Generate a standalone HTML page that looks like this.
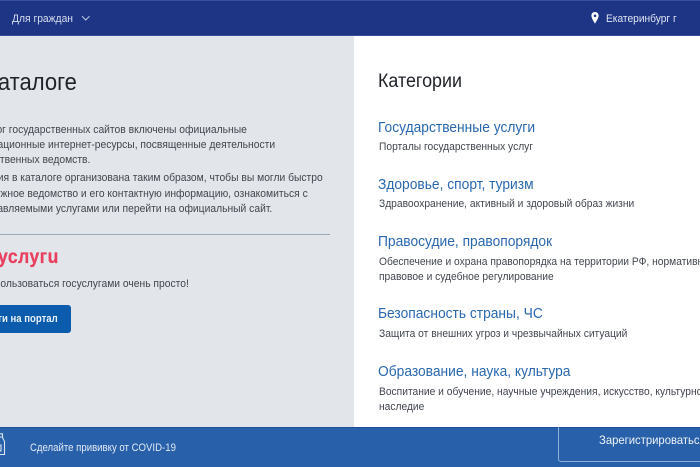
<!DOCTYPE html>
<html lang="ru"><head><meta charset="utf-8"><title>Каталог</title>
<style>
html,body{margin:0;padding:0;width:700px;height:467px;overflow:hidden;background:#fff}
body{position:relative;font-family:"Liberation Sans",sans-serif}
.t{position:absolute;white-space:nowrap;margin:0;transform-origin:0 50%}
#wrap{position:absolute;left:0;top:0;width:700px;height:467px;overflow:hidden;filter:blur(.3px)}
.b{font-size:11px;line-height:15px;color:#41464e;transform:scaleX(.937)}
.h{font-size:15px;line-height:18px;color:#2a68ae;transform:scaleX(.92)}
.s{font-size:11px;line-height:15px;color:#41464e;transform:scaleX(.932)}
</style></head><body><div id="wrap">
<div style="position:absolute;left:0;top:0;width:700px;height:36px;background:#1e3585;border-top:1px solid #3a509c;border-bottom:1px solid #3a509c;box-sizing:border-box"></div>
<div class="t" style="left:12px;top:12px;font-size:11px;line-height:14px;color:#d8dfef;transform:scaleX(.937)">Для граждан</div>
<svg style="position:absolute;left:81px;top:15px" width="10" height="7" viewBox="0 0 10 7"><path d="M1 1.2 L4.7 5 L8.5 1.2" fill="none" stroke="#c5cfe6" stroke-width="1"/></svg>
<svg style="position:absolute;left:591px;top:12px" width="8" height="12" viewBox="0 0 8 12"><path fill-rule="evenodd" d="M4 0C1.8 0 .4 1.6.4 3.7.4 6.2 4 11.5 4 11.5S7.6 6.2 7.6 3.7C7.6 1.6 6.2 0 4 0ZM4 2.5A1.3 1.3 0 1 1 4 5.1 1.3 1.3 0 1 1 4 2.5Z" fill="#fff"/></svg>
<div class="t" style="left:606px;top:12px;font-size:11px;line-height:14px;color:#dfe5f2;transform:scaleX(.927)">Екатеринбург г</div>

<div style="position:absolute;left:0;top:36px;width:354px;height:391px;background:#e2e5ea"></div>
<div class="t" style="left:-33px;top:69px;font-size:24px;line-height:28px;color:#1f2329;transform:scaleX(.917)">В каталоге</div>
<div class="t b" style="left:-40px;top:123px">В каталог государственных сайтов включены официальные</div>
<div class="t b" style="left:-41px;top:138px">информационные интернет-ресурсы, посвященные деятельности</div>
<div class="t b" style="left:-42px;top:153px">государственных ведомств.</div>
<div class="t b" style="left:-54px;top:171px">Информация в каталоге организована таким образом, чтобы вы могли быстро</div>
<div class="t b" style="left:-41px;top:187px">найти нужное ведомство и его контактную информацию, ознакомиться с</div>
<div class="t b" style="left:-41px;top:202px">предоставляемыми услугами или перейти на официальный сайт.</div>
<div style="position:absolute;left:0;top:234px;width:330px;height:1px;background:#9aa8b8"></div>
<div class="t" style="left:-2px;top:246px;font-size:19px;line-height:24px;font-weight:bold;color:#e8405f;letter-spacing:.6px;-webkit-text-stroke:.3px #e8405f;transform:scaleX(.92)">услугu</div>
<div class="t b" style="left:-42px;top:277px">Начать пользоваться госуслугами очень просто!</div>
<div style="position:absolute;left:-60px;top:305px;width:131px;height:28px;background:#0b5cad;border-radius:3px"></div>
<div class="t" style="left:-32px;top:312px;font-size:11px;line-height:14px;font-weight:bold;color:#e8f0fa;transform:scaleX(.87)">Перейти на портал</div>

<div class="t" style="left:378px;top:71px;font-size:19px;line-height:22px;color:#1f2329;transform:scaleX(.942)">Категории</div>
<div class="t h" style="left:378px;top:119px">Государственные услуги</div>
<div class="t s" style="left:379px;top:140px">Порталы государственных услуг</div>
<div class="t h" style="left:378px;top:176px">Здоровье, спорт, туризм</div>
<div class="t s" style="left:379px;top:197px">Здравоохранение, активный и здоровый образ жизни</div>
<div class="t h" style="left:378px;top:233px">Правосудие, правопорядок</div>
<div class="t s" style="left:379px;top:255px">Обеспечение и охрана правопорядка на территории РФ, нормативно-</div>
<div class="t s" style="left:379px;top:270px">правовое и судебное регулирование</div>
<div class="t h" style="left:378px;top:305px">Безопасность страны, ЧС</div>
<div class="t s" style="left:379px;top:327px">Защита от внешних угроз и чрезвычайных ситуаций</div>
<div class="t h" style="left:378px;top:363px">Образование, наука, культура</div>
<div class="t s" style="left:379px;top:385px">Воспитание и обучение, научные учреждения, искусство, культурное</div>
<div class="t s" style="left:379px;top:400px">наследие</div>

<div style="position:absolute;left:0;top:427px;width:700px;height:40px;background:#2860a9;border-top:1px solid #1f4f96;box-sizing:border-box"></div>
<svg style="position:absolute;left:-4px;top:433px" width="10" height="24" viewBox="0 0 10 24"><path d="M1 .8H6.5V4H1ZM1 4C1 6 -1 7 -1 9V21.5H8.5V9C8.5 7 6.5 6 6.5 4M-1 12H5V18H-1" fill="none" stroke="#dbe6f4" stroke-width="1.1"/></svg>
<div class="t" style="left:30px;top:441px;font-size:11px;line-height:14px;color:#e3ebf6;transform:scaleX(.873)">Сделайте прививку от COVID-19</div>
<div style="position:absolute;left:558px;top:420px;width:170px;height:42px;border:1px solid #8fb0d8;border-radius:3px;box-sizing:border-box;border-top:none"></div>
<div class="t" style="left:599px;top:433px;font-size:12px;line-height:15px;color:#eef3fa;transform:scaleX(.94)">Зарегистрироваться</div>
<div style="position:absolute;left:558px;top:420px;width:142px;height:7px;background:#fff"></div>
</div></body></html>
